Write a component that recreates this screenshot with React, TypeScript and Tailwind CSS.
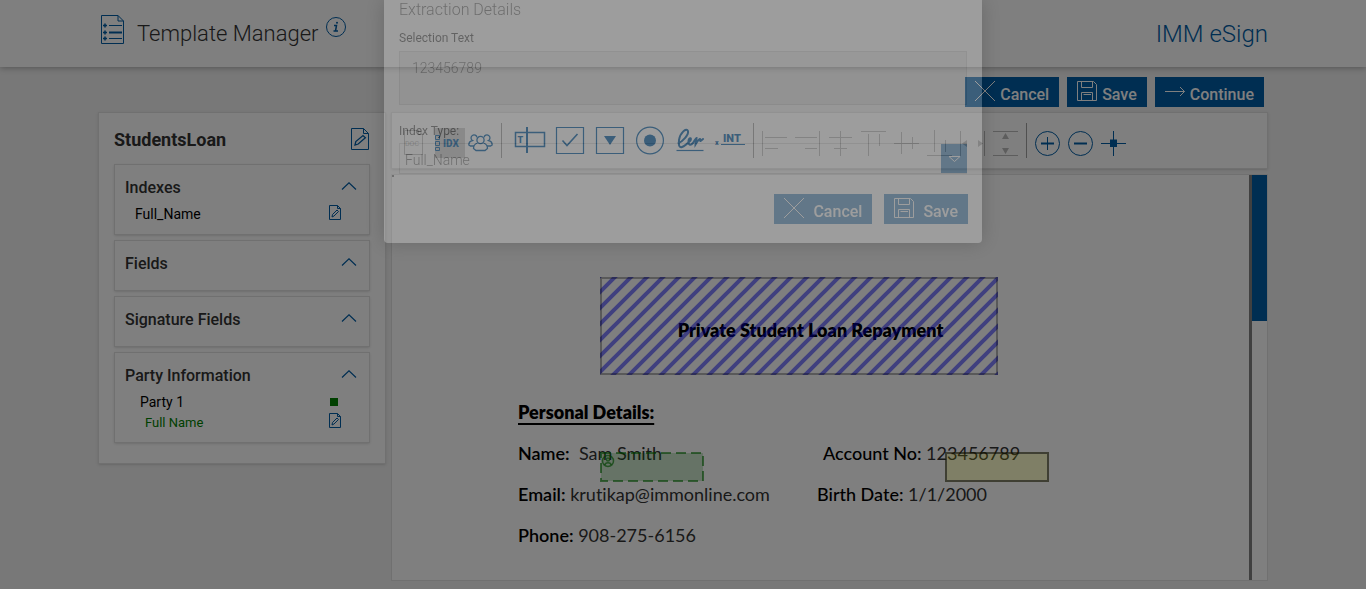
import * as React from "react"
import { clsx } from "clsx"

interface IconProps {
  className?: string;
}

function CloseIcon({ className }: IconProps) {
  return (
    <svg viewBox="0 0 20 20" className={clsx("h-5 w-5 shrink-0", className)} fill="none" stroke="currentColor" aria-hidden="true">
      <path d="M0 0L20 20M20 0L0 20" />
    </svg>
  );
}

function SaveIcon({ className }: IconProps) {
  return (
    <svg viewBox="0 0 20 20" className={clsx("h-5 w-5 shrink-0", className)} fill="none" stroke="currentColor" aria-hidden="true">
      <path d="M.5 .5H16.5L19.5 3.5V19.5H.5ZM4.5 .5V6.5H15.5V.5M4.5 19.5V11.5H15.5V19.5M6.5 13.5H14" />
    </svg>
  );
}

function ArrowIcon() {
  return (
    <svg viewBox="0 0 20 20" className="h-5 w-5 shrink-0" fill="none" stroke="currentColor" aria-hidden="true">
      <path d="M0 10.5H19.5M15 6L19.5 10.5L15 15" />
    </svg>
  );
}

function EditIcon() {
  return (
    <svg viewBox="0 0 18 22" className="h-[22px] w-[18px]" fill="none" stroke="currentColor" aria-hidden="true">
      <path d="M.5 .5H12.5L17.5 5.5V21.5H.5ZM12.5 .5V5.5H17.5" />
      <path d="M4 17L4.8 13.6L12 7.5L14.4 9.8L7.2 16Z" strokeWidth="1.3" />
    </svg>
  );
}

function SmallEditIcon() {
  return (
    <svg viewBox="0 0 12 16" className="h-4 w-3" fill="none" stroke="currentColor" aria-hidden="true">
      <path d="M.5 .5H8.5L11.5 3.5V14.5H.5ZM8.5 .5V3.5H11.5" />
      <path d="M3 12L3.5 9.5L8 5L9.5 6.5L5 11Z" />
    </svg>
  );
}

function Chevron() {
  return (
    <svg viewBox="0 0 16 8" className="h-2 w-4" fill="none" stroke="currentColor" strokeWidth="1.2" aria-hidden="true">
      <path d="M1 7.5L8 .8L15 7.5" />
    </svg>
  );
}

interface PanelCardProps {
  title: string;
  children?: React.ReactNode;
}

function PanelCard({ title, children }: PanelCardProps) {
  return (
    <section className="min-h-[51px] border border-[#e0e0e0] bg-white pb-2 pl-2.5 pr-3 shadow-sm">
      <div className="flex h-[39px] items-center justify-between pt-1.5">
        <h3 className="text-base font-medium text-[#333]">{title}</h3>
        <button type="button" aria-label={`Toggle ${title}`} className="mb-1 text-[#005ca4]">
          <Chevron />
        </button>
      </div>
      {children}
    </section>
  );
}

interface ToolProps {
  label: string;
  width?: string;
  className?: string;
  children: React.ReactNode;
}

function Tool({ label, width = "w-[25px]", className, children }: ToolProps) {
  return (
    <button type="button" aria-label={label} className={clsx("flex h-[30px] shrink-0 items-center justify-center", width, className)}>
      {children}
    </button>
  );
}

function Divider({ className }: IconProps) {
  return <div className={clsx("h-[35px] w-px shrink-0 bg-[#a0a0a0]", className)} />;
}

const ALIGN_TOOLS = [
  { label: "Align left", d: "M.5 0V25M3 6.5H25M3 17.5H16" },
  { label: "Align right", d: "M24.5 0V25M0 6.5H22M10 17.5H22" },
  { label: "Align center", d: "M12.5 0V25M1 6.5H24M6 17.5H19" },
  { label: "Align top", d: "M0 .5H25M7.5 3V25M18.5 3V15" },
  { label: "Align middle", d: "M0 12.5H25M7.5 1V23M18.5 6V18" },
  { label: "Align bottom", d: "M0 24.5H25M7.5 -1V21M18.5 9V21" },
  { label: "Distribute horizontally", d: "M.5 0V25M24.5 0V25", heads: "M2 12.5L7 9V16ZM23 12.5L18 9V16Z" },
  { label: "Distribute vertically", d: "M0 .5H25M0 24.5H25", heads: "M12.5 2L16 8H9ZM12.5 23L16 17H9Z" },
];

function Toolbar() {
  return (
    <div className="flex h-[57px] items-center overflow-hidden border border-[#e0e0e0] bg-white pl-3 text-[#005ca4] shadow-sm">
      <div className="mt-1 flex shrink-0">
        <Tool label="Document" width="w-5" className="text-[#bbb]">
          <svg viewBox="0 0 20 26" className="h-[26px] w-5" fill="none" stroke="currentColor">
            <path d="M.5 .5H15L18.5 4V24.5H.5ZM14.5 .5V4.5H18.5" />
            <text x="1" y="16" fontSize="7" stroke="none" fill="currentColor" fontFamily="Roboto, sans-serif">DOC</text>
          </svg>
        </Tool>
        <Tool label="Index" width="w-[30px]" className="ml-[11px] bg-[#ccc]">
          <svg viewBox="0 0 30 30" className="h-[30px] w-[30px]" fill="none" stroke="currentColor">
            <path d="M.5 7.5H4.5V11.5H.5ZM.5 13.5H4.5V17.5H.5ZM.5 19.5H4.5V22.5H.5Z" />
            <text x="8" y="19" fontSize="10" fontWeight="900" stroke="none" fill="currentColor" fontFamily="Roboto, sans-serif">IDX</text>
          </svg>
        </Tool>
        <Tool label="Parties" className="ml-[3px]">
          <svg viewBox="0 0 25 18" className="h-[18px] w-[25px]" fill="none" stroke="currentColor" strokeWidth="1.3">
            <circle cx="12.5" cy="6" r="3.6" />
            <path d="M9.5 9C6.5 10 5.5 12 5.5 14.5L8 16.5H17L19.5 14.5C19.5 12 18.5 10 15.5 9" />
            <path d="M9 3.5A3 3 0 1 0 4.5 6.5C2 7 .8 8.5 .8 11L2.5 12H6M16 3.5A3 3 0 1 1 20.5 6.5C23 7 24.2 8.5 24.2 11L22.5 12H19" />
          </svg>
        </Tool>
      </div>
      <Divider className="ml-2" />
      <div className="mb-0.5 ml-3 flex shrink-0 gap-2">
        <Tool label="Text field" width="w-8">
          <svg viewBox="0 0 32 30" className="h-[30px] w-8" fill="none" stroke="currentColor">
            <path d="M1.5 7.5H30.5V21.5H1.5Z" strokeWidth="1.5" />
            <path d="M13 2V28" strokeWidth="2" />
            <text x="3.5" y="18" fontSize="9" fontWeight="900" stroke="none" fill="currentColor" fontFamily="Roboto, sans-serif">T</text>
          </svg>
        </Tool>
        <Tool label="Checkbox" width="w-8">
          <svg viewBox="0 0 32 30" className="h-[30px] w-8" fill="none" stroke="currentColor">
            <path d="M2.5 2.5H29.5V28.5H2.5Z" strokeWidth="1.2" />
            <path d="M8.5 15.5L13 20.5L23.5 9" strokeWidth="1.6" />
          </svg>
        </Tool>
        <Tool label="Dropdown" width="w-8">
          <svg viewBox="0 0 32 30" className="h-[30px] w-8" fill="none" stroke="currentColor">
            <path d="M2.5 2.5H29.5V28.5H2.5Z" strokeWidth="1.2" />
            <path d="M10 11H22L16 20Z" fill="currentColor" stroke="none" />
          </svg>
        </Tool>
        <Tool label="Radio button" width="w-8">
          <svg viewBox="0 0 32 30" className="h-[30px] w-8" fill="none" stroke="currentColor">
            <circle cx="16" cy="15.5" r="13.4" strokeWidth="1.2" />
            <circle cx="16" cy="15.5" r="6" fill="currentColor" stroke="none" />
          </svg>
        </Tool>
        <Tool label="Signature" width="w-8">
          <svg viewBox="0 0 32 30" className="h-[30px] w-8" fill="none" stroke="currentColor" strokeLinecap="round">
            <path d="M4.5 18C8 17 15 10 14 6C12.500 2 6 8 5 15C4.500 20 5 23 8 22C11 21 14 18 16.500 15.500C18 12.500 15 12.500 14.500 16C14 20 16.500 21 19 18C21 15 22 13 22.500 13C22.500 16 21.500 18 21.500 19.500C23 17 25 14 26 14C27 15 24.500 18 29 14" strokeWidth="2" />
            <path d="M2.500 25.500H29.500" strokeLinecap="butt" strokeWidth="1.200" />
          </svg>
        </Tool>
        <Tool label="Initials" width="w-8">
          <svg viewBox="0 0 32 30" className="h-[30px] w-8" fill="currentColor" fontFamily="Roboto, sans-serif" fontWeight="900">
            <text x="1" y="20" fontSize="7">x</text>
            <text x="9" y="17" fontSize="11">INT</text>
            <path d="M7 19H31V20H7Z" />
          </svg>
        </Tool>
      </div>
      <Divider className="ml-[7px]" />
      <div className="ml-2 mt-1.5 flex shrink-0 gap-2 text-[#bbb]">
        {ALIGN_TOOLS.map((tool) => (
          <Tool key={tool.label} label={tool.label}>
            <svg viewBox="0 0 25 25" className="h-[25px] w-[25px] overflow-visible" fill="none" stroke="currentColor">
              <path d={tool.d} />
              {tool.heads && <path d={tool.heads} fill="currentColor" stroke="none" />}
            </svg>
          </Tool>
        ))}
      </div>
      <Divider className="ml-2" />
      <div className="ml-2 mt-1.5 flex shrink-0 gap-2">
        <Tool label="Zoom in">
          <svg viewBox="0 0 25 25" className="h-[25px] w-[25px]" fill="none" stroke="currentColor">
            <circle cx="12.500" cy="12.500" r="12" />
            <path d="M6 12.500H19" strokeWidth="2" />
            <path d="M12.500 6V19" />
          </svg>
        </Tool>
        <Tool label="Zoom out">
          <svg viewBox="0 0 25 25" className="h-[25px] w-[25px]" fill="none" stroke="currentColor">
            <circle cx="12.500" cy="12.500" r="12" />
            <path d="M6 12.500H19" strokeWidth="2" />
          </svg>
        </Tool>
        <Tool label="Fit to page">
          <svg viewBox="0 0 25 25" className="h-[25px] w-[25px]" fill="none" stroke="currentColor">
            <path d="M0 12.500H25M12.500 0V25" />
            <path d="M9 8.500H16V16H9Z" fill="currentColor" stroke="none" />
          </svg>
        </Tool>
      </div>
    </div>
  );
}

function SidePanel() {
  return (
    <aside className="w-full border border-[#e0e0e0] bg-white px-[15px] pb-5 shadow-sm">
      <div className="flex h-[51px] items-center justify-between">
        <h2 className="pt-0.5 text-lg font-bold leading-6 text-[#333]">StudentsLoan</h2>
        <button type="button" aria-label="Edit template" className="mr-px text-[#005ca4]">
          <EditIcon />
        </button>
      </div>
      <div className="flex flex-col gap-[5px]">
        <PanelCard title="Indexes">
          <div className="flex h-[22px] items-start justify-between pl-2.5 pr-4 text-sm text-black">
            <span>Full_Name</span>
            <button type="button" aria-label="Edit Full_Name" className="pt-px text-[#005ca4]">
              <SmallEditIcon />
            </button>
          </div>
        </PanelCard>
        <PanelCard title="Fields" />
        <PanelCard title="Signature Fields" />
        <PanelCard title="Party Information">
          <div className="flex h-5 items-center justify-between pl-[15px] pr-[19px] text-sm text-black">
            <span>Party 1</span>
            <span className="size-2 bg-[#008000]" />
          </div>
          <div className="flex h-[22px] items-start justify-between pl-5 pr-4 text-[13px] leading-[21px] text-[#008000]">
            <span>Full Name</span>
            <button type="button" aria-label="Edit Full Name" className="pt-px text-[#005ca4]">
              <SmallEditIcon />
            </button>
          </div>
        </PanelCard>
      </div>
    </aside>
  );
}

function DocumentView() {
  return (
    <div className="mt-[5px] flex h-[407px] border border-[#e0e0e0] bg-white">
      <div className="relative flex-1 overflow-hidden pl-[126px] pr-[146px] pt-[143px] font-['Lato',sans-serif] text-lg leading-6 text-[#333] [font-variant-ligatures:none]">
        <span className="absolute left-0 top-0 size-0.5 bg-[#888]" />
        <h1 className="text-center font-extrabold text-black">Private Student Loan Repayment</h1>
        <h2 className="mt-[58px] font-extrabold text-black underline decoration-2 underline-offset-4">Personal Details:</h2>
        <div className="mt-[17px] flex flex-col gap-[17px] whitespace-nowrap">
          <div className="flex">
            <p className="w-[305px] shrink-0"><span className="font-semibold text-black">Name:</span>&nbsp; Sam Smith</p>
            <p><span className="font-medium text-black">Account No:</span> 123456789</p>
          </div>
          <div className="flex">
            <p className="w-[299px] shrink-0"><span className="font-semibold text-black">Email:</span> krutikap@immonline.com</p>
            <p><span className="font-medium text-black">Birth Date:</span> 1/1/2000</p>
          </div>
          <p><span className="font-semibold text-black">Phone:</span> 908-275-6156</p>
        </div>

        {/* Zones the user has drawn on the scanned page */}
        <svg className="absolute left-[208px] top-[102px] h-[98px] w-[398px]" aria-hidden="true">
          <defs>
            <pattern id="hatch" width="16" height="16" patternUnits="userSpaceOnUse" patternTransform="translate(-1 0)">
              <path d="M-4 4L4 -4M-4 20L20 -4M12 20L20 12" stroke="#00f" strokeWidth="4" />
            </pattern>
          </defs>
          <rect width="398" height="98" fill="url(#hatch)" opacity="0.5" />
          <rect x="1" y="1" width="396" height="96" fill="none" stroke="#000" strokeOpacity="0.3" strokeWidth="2" />
        </svg>
        <svg className="absolute left-[208px] top-[277px] h-[30px] w-[104px]" aria-hidden="true">
          <rect x="1" y="1" width="102" height="28" fill="#008000" fillOpacity="0.2" stroke="#008000" strokeOpacity="0.6" strokeWidth="2" strokeDasharray="10 5" />
          <g fill="none" stroke="#008000" strokeOpacity="0.65" strokeWidth="1.5">
            <circle cx="8" cy="9" r="5.500" />
            <circle cx="8" cy="7.500" r="1.500" />
            <path d="M5 13C5 10 11 10 11 13" />
          </g>
        </svg>
        <div className="absolute left-[553px] top-[277px] h-[30px] w-[104px] border-2 border-black/50 bg-[#ffff00]/20" />
      </div>
      <div className="w-[18px] border-l-[3px] border-[#808080]">
        <div className="h-[146px] bg-[#005ca4]" />
      </div>
    </div>
  );
}

function ExtractionDialog() {
  return (
    <div
      role="dialog"
      aria-label="Extraction Details"
      className="fixed inset-x-0 top-0 z-50 mx-auto w-full max-w-[598px] rounded-b bg-white px-[15px] pb-[19px] text-[#333] opacity-[0.23] shadow-[0_0_20px_rgba(0,0,0,0.8)]"
    >
      <h2 className="text-base font-light leading-5">Extraction Details</h2>
      <label htmlFor="selection-text" className="mt-2.5 block text-xs leading-4 text-black">Selection Text</label>
      <textarea
        id="selection-text"
        readOnly
        defaultValue="123456789"
        className="mt-[5px] block h-[54px] w-full resize-none border border-[#ccc] bg-[#e9e9e9] px-3 py-1.5 text-sm font-light"
      />
      <label htmlFor="index-type" className="mt-[18px] block text-xs leading-4 text-black">Index Type:</label>
      <div className="mt-1 flex h-[31px] w-full border border-r-0 border-[#ccc]">
        <select id="index-type" className="min-w-0 flex-1 appearance-none px-[5px] pt-[3px] text-sm font-light">
          <option>Full_Name</option>
        </select>
        <span className="flex w-[26px] items-center justify-center bg-[#005ca4] text-white">
          <svg viewBox="0 0 13 6" className="h-1.5 w-[13px]" fill="none" stroke="currentColor" aria-hidden="true">
            <path d="M1 .5H12L6.500 5.500Z" />
          </svg>
        </span>
      </div>
      <div className="-mr-px mt-5 flex justify-end gap-3 text-base font-medium text-white">
        <button type="button" className="flex h-[30px] items-start gap-[9px] bg-[#005ca4] px-2.5 pt-1">
          <CloseIcon />
          <span className="pt-0.5">Cancel</span>
        </button>
        <button type="button" className="flex h-[30px] items-start gap-[9px] bg-[#005ca4] px-2.5 pt-1">
          <SaveIcon />
          <span className="pt-0.5">Save</span>
        </button>
      </div>
    </div>
  );
}

export default function App() {
  return (
    <div className="min-h-screen bg-[#f0f0f0] font-['Roboto',sans-serif]">
      <header className="bg-white shadow-[0_1px_6px_rgba(0,0,0,0.3)]">
        <div className="mx-auto flex h-[67px] max-w-[1170px] items-start justify-between">
          <div className="flex items-start pl-[3px] text-[#005ca4]">
            <svg viewBox="0 0 23 29" className="mt-[15px] h-[29px] w-[23px]" fill="none" stroke="currentColor" aria-hidden="true">
              <path d="M.500 .500H17L22.500 6V28.500H.500ZM17 .500V6H22.500M8 10.500H21M8 23.500H21" />
              <path d="M8 17.500H21" strokeWidth="2" />
              <path d="M2 10.500H6M4 8.500V12.500M2 17.500H6M4 15.500V19.500M2 23.500H6M4 21.500V25.500" strokeWidth="1.500" />
            </svg>
            <h1 className="ml-[13px] mt-[18px] text-[22px] font-light leading-8 text-[#333]">Template Manager</h1>
            <button type="button" aria-label="Help" className="ml-2 mt-[17px]">
              <svg viewBox="0 0 20 20" className="h-5 w-5" fill="none" stroke="currentColor">
                <circle cx="10" cy="10" r="9.500" />
                <path d="M8 8.500H10.500L9.500 14H12M7.500 14H9.500" strokeWidth="1.500" />
                <circle cx="11" cy="5.800" r="1" fill="currentColor" stroke="none" />
              </svg>
            </button>
          </div>
          <a href="#" className="mt-[18px] text-2xl font-light text-[#005ca4]">IMM eSign</a>
        </div>
      </header>

      <main className="mx-auto max-w-[1170px] pb-2 pt-2.5">
        <div className="flex justify-end gap-2 pr-1 text-base font-medium text-white">
          <button type="button" className="flex h-[30px] items-start gap-[5px] bg-[#005ca4] px-2.5 pt-1">
            <CloseIcon />
            <span className="pt-0.5">Cancel</span>
          </button>
          <button type="button" className="flex h-[30px] items-start gap-[5px] bg-[#005ca4] px-2.5 pt-1">
            <SaveIcon />
            <span className="pt-0.5">Save</span>
          </button>
          <button type="button" className="flex h-[30px] items-start gap-[5px] bg-[#005ca4] px-2.5 pt-1">
            <ArrowIcon />
            <span className="pt-0.5">Continue</span>
          </button>
        </div>
        <div className="mt-[5px] flex items-start gap-[5px]">
          <div className="w-[288px] shrink-0">
            <SidePanel />
          </div>
          <div className="min-w-0 flex-1">
            <Toolbar />
            <DocumentView />
          </div>
        </div>
      </main>

      <div className="fixed inset-0 z-40 bg-black/50" />
      <ExtractionDialog />
    </div>
  );
}
